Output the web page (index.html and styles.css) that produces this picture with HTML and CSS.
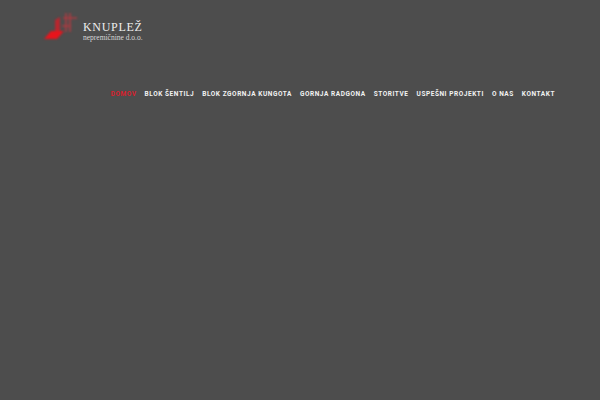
FILE: index.html
```html
<!DOCTYPE html>
<html lang="sl">
<head>
<meta charset="utf-8">
<title>Knuplež nepremičnine d.o.o.</title>
<link rel="stylesheet" href="styles.css">
</head>
<body>
<header class="header">
  <a class="logo" href="#">
    <svg class="logo-mark" width="34" height="30" viewBox="0 0 34 30" aria-hidden="true">
      <path class="mark-solid" d="M8 19 L21 19 L14 27 L1 27 Z"/>
      <path class="mark-column" d="M12 8 L17 5 L17 19 L12 19 Z"/>
      <path class="mark-soft" d="M23 1 L23 20 M27 1 L27 20 M20 6 L34 6 M19 14 L28 14" fill="none"/>
    </svg>
    <span class="logo-text">
      <span class="logo-name">KNUPLEŽ</span>
      <span class="logo-sub">nepremičnine d.o.o.</span>
    </span>
  </a>
  <nav class="nav">
    <a class="nav-item active" href="#">DOMOV</a>
    <a class="nav-item" href="#">BLOK ŠENTILJ</a>
    <a class="nav-item" href="#">BLOK ZGORNJA KUNGOTA</a>
    <a class="nav-item" href="#">GORNJA RADGONA</a>
    <a class="nav-item" href="#">STORITVE</a>
    <a class="nav-item" href="#">USPEŠNI PROJEKTI</a>
    <a class="nav-item" href="#">O NAS</a>
    <a class="nav-item" href="#">KONTAKT</a>
  </nav>
</header>
</body>
</html>
```
FILE: styles.css
```css
html, body {
  margin: 0;
  height: 100%;
  background: #4d4d4d;
  overflow: hidden;
}
.header {
  display: flex;
  flex-direction: column;
  padding: 12px 45px 0 43px;
}
.logo {
  display: flex;
  align-items: flex-start;
  gap: 6px;
  text-decoration: none;
}
.logo-mark {
  flex: none;
  filter: blur(0.8px);
}
.mark-solid {
  fill: #e8141c;
}
.mark-column {
  fill: #b8262e;
}
.mark-soft {
  stroke: #b03a40;
  stroke-width: 1.6;
}
.logo-text {
  display: flex;
  flex-direction: column;
  margin-top: 9px;
  color: #eeeeee;
  font-family: "Liberation Serif", serif;
}
.logo-name {
  font-size: 12px;
  line-height: 12px;
  letter-spacing: 0.7px;
}
.logo-sub {
  font-size: 7.5px;
  line-height: 9px;
  color: #d8d8d8;
}
.nav {
  display: flex;
  justify-content: flex-end;
  gap: 8px;
  margin-top: 47px;
}
.nav-item {
  color: #f2f2f2;
  font-family: Roboto, sans-serif;
  font-size: 6.5px;
  font-weight: 700;
  line-height: 10px;
  letter-spacing: 0.56px;
  text-decoration: none;
  white-space: nowrap;
}
.active {
  color: #d9202c;
}
```
